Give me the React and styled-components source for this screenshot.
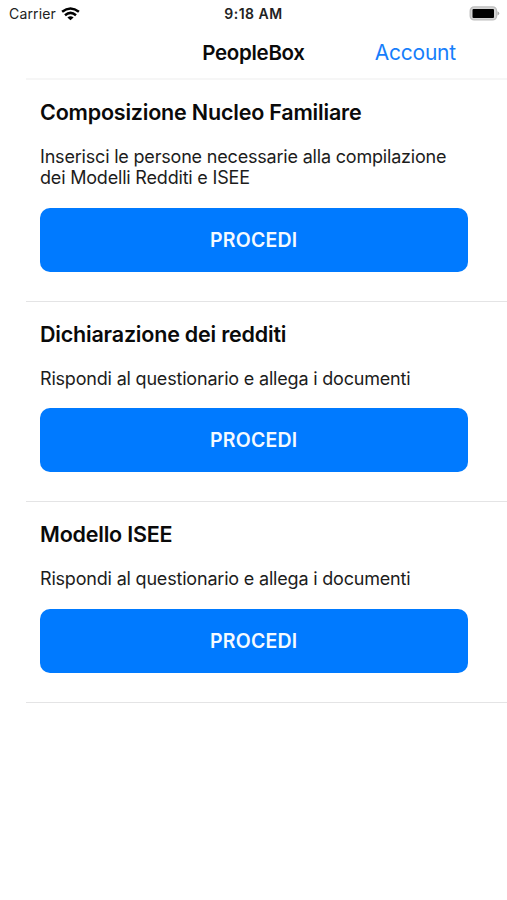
import React from 'react';
import styled, { createGlobalStyle } from 'styled-components';

const GlobalStyle = createGlobalStyle`
  * { box-sizing: border-box; }
  body { margin: 0; background: #fff; }
`;

const Screen = styled.main`
  width: 507px;
  height: 900px;
  background: #fff;
  color: #0a0a0a;
  font-family: Inter, sans-serif;
  overflow: hidden;
`;

const StatusBar = styled.div`
  display: grid;
  grid-template-columns: 1fr auto 1fr;
  align-items: center;
  height: 27px;
  padding: 0 7px 0 9px;
  font-size: 14px;
`;

const Carrier = styled.div`
  display: flex;
  align-items: center;
  gap: 5px;
  color: #222;
  letter-spacing: 0.15px;
`;

const Time = styled.div`
  color: #222;
  font-weight: 600;
  letter-spacing: 0.5px;
  margin-right: 2px;
`;

const BatterySlot = styled.div`
  display: flex;
  justify-content: flex-end;
`;

const NavBar = styled.header`
  display: grid;
  grid-template-columns: 1fr auto 1fr;
  align-items: center;
  height: 51px;
  padding: 0 51px;
`;

const Title = styled.h1`
  grid-column: 2;
  margin: 0;
  font-size: 20.5px;
  font-weight: 600;
  line-height: 26px;
  letter-spacing: -0.3px;
`;

const AccountLink = styled.a`
  justify-self: end;
  color: #167efb;
  font-size: 21px;
  line-height: 26px;
  letter-spacing: -0.2px;
`;

const List = styled.div`
  margin-left: 26px;
  border-top: 2px solid #f6f6f6;
`;

const Section = styled.section`
  padding: 18.9px 39.5px 29px 14px;
  border-bottom: 1px solid #e4e4e5;
`;

const Heading = styled.h2`
  margin: 0 0 21px;
  font-size: 21.5px;
  font-weight: 600;
  line-height: 26px;
  letter-spacing: -0.2px;
`;

const Description = styled.p`
  margin: 0 0 19px;
  color: #1c1c1c;
  font-size: 18px;
  line-height: 21.5px;
  letter-spacing: -0.19px;
  white-space: pre-line;
`;

const Button = styled.button`
  display: block;
  width: 100%;
  height: 64px;
  padding: 0;
  border: 0;
  border-radius: 10px;
  background: #007aff;
  color: #f4faff;
  font: 600 19.5px Inter, sans-serif;
  letter-spacing: 0.2px;
`;

const sections = [
  { title: 'Composizione Nucleo Familiare', text: 'Inserisci le persone necessarie alla compilazione\ndei Modelli Redditi e ISEE' },
  { title: 'Dichiarazione dei redditi', text: 'Rispondi al questionario e allega i documenti' },
  { title: 'Modello ISEE', text: 'Rispondi al questionario e allega i documenti' },
];

const WifiIcon = () => (
  <svg width="19" height="14" viewBox="0 0 19 14" fill="none" stroke="#000" strokeWidth="2.5">
    <path d="M1.1 4.8Q9.5-1.8 17.9 4.8" />
    <path d="M4 8.2Q9.5 3.6 15 8.2" />
    <path d="M6.4 10.5Q9.5 8 12.6 10.5L9.5 13.3z" fill="#000" stroke="none" />
  </svg>
);

const BatteryIcon = () => (
  <svg width="31" height="15" viewBox="0 0 31 15">
    <rect x="1.2" y="0.9" width="26.4" height="13" rx="4" fill="#d4d4d4" stroke="#bdbdbd" strokeWidth="1.3" />
    <rect x="3.5" y="3" width="21.5" height="9" rx="1" />
    <path d="M28.5 5.2q3.6 2.2 0 4.4z" fill="#a8a8a8" />
  </svg>
);

export default function App() {
  return (
    <Screen>
      <GlobalStyle />
      <StatusBar>
        <Carrier>Carrier <WifiIcon /></Carrier>
        <Time>9:18 AM</Time>
        <BatterySlot><BatteryIcon /></BatterySlot>
      </StatusBar>
      <NavBar>
        <Title>PeopleBox</Title>
        <AccountLink>Account</AccountLink>
      </NavBar>
      <List>
        {sections.map((s) => (
          <Section key={s.title}>
            <Heading>{s.title}</Heading>
            <Description>{s.text}</Description>
            <Button>PROCEDI</Button>
          </Section>
        ))}
      </List>
    </Screen>
  );
}
